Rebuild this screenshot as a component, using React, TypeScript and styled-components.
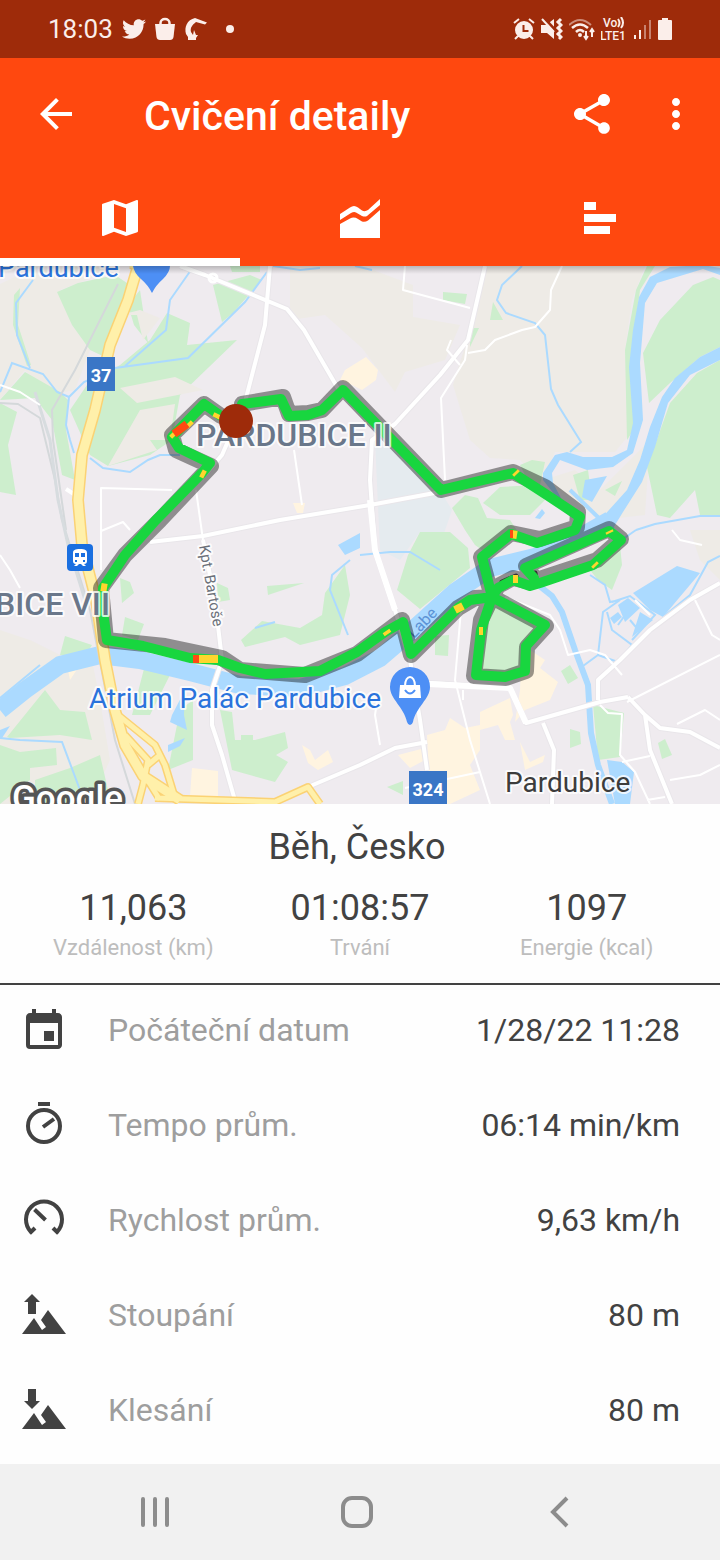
import React from "react";
import styled, { createGlobalStyle } from "styled-components";
import { MdArrowBack, MdEvent, MdMap, MdMoreVert, MdShare } from "react-icons/md";
import { FaTwitter } from "react-icons/fa";

const GlobalStyle = createGlobalStyle`
  *, *::before, *::after { box-sizing: border-box; }
  body {
    margin: 0;
    background: #fefefe;
    color: #424242;
    font-family: Roboto, "Liberation Sans", sans-serif;
  }
  svg { display: block; flex: none; }
`;

const Screen = styled.div`
  display: flex;
  flex-direction: column;
  min-height: 100vh;
`;

const StatusBar = styled.div`
  display: flex;
  align-items: center;
  justify-content: space-between;
  height: 58px;
  padding: 0 48px;
  background: #9e2b0a;
  color: #fbeeea;
`;

const StatusGroup = styled.div<{ $gap: number }>`
  display: flex;
  align-items: center;
  gap: ${(p) => p.$gap}px;
`;

const Clock = styled.time`
  font-size: 26px;
  line-height: 32px;
`;

const Header = styled.header`
  background: #ff480f;
  color: #fff;
`;

const Toolbar = styled.div`
  display: flex;
  align-items: center;
  height: 112px;
  padding: 0 20px 0 32px;
`;

const Title = styled.h1`
  flex: 1;
  margin: 4px 0 0 64px;
  font-size: 41px;
  line-height: 48px;
  font-weight: 500;
`;

const IconButton = styled.button`
  display: flex;
  margin: 0 0 0 36px;
  padding: 0;
  border: 0;
  background: none;
  color: inherit;
  &:first-child { margin: 0; }
`;

const Tabs = styled.nav`
  display: grid;
  grid-template-columns: repeat(3, 1fr);
  height: 96px;
`;

const Tab = styled.button<{ $active?: boolean }>`
  display: flex;
  align-items: center;
  justify-content: center;
  padding: 8px 0 0;
  border: 0;
  border-bottom: 8px solid ${(p) => (p.$active ? "#fff" : "transparent")};
  background: none;
  color: inherit;
`;

const MapSvg = styled.svg`
  width: 100%;
  height: auto;
  background: #efebef;
`;

const Summary = styled.section`
  padding: 21px 20px;
  border-bottom: 2px solid #424242;
`;

const Activity = styled.h2`
  margin: 0 0 17px;
  padding-right: 6px;
  font-size: 36px;
  line-height: 44px;
  font-weight: 400;
  text-align: center;
`;

const Stats = styled.dl`
  display: grid;
  grid-template-columns: repeat(3, 1fr);
  margin: 0;
`;

const Stat = styled.div`
  display: flex;
  flex-direction: column-reverse;
  gap: 4px;
  text-align: center;
`;

const StatLabel = styled.dt`
  font-size: 22px;
  line-height: 28px;
  color: #bdbdbd;
  white-space: nowrap;
`;

const StatValue = styled.dd`
  margin: 0;
  font-size: 36px;
  line-height: 44px;
`;

const Details = styled.dl`
  flex: 1;
  margin: 0;
  padding-bottom: 4px;
`;

const DetailRow = styled.div`
  display: flex;
  align-items: center;
  height: 95px;
  padding: 0 40px 4px 20px;
  font-size: 32px;
  line-height: 40px;
`;

const DetailLabel = styled.dt`
  flex: 1;
  margin-left: 40px;
  padding-bottom: 2px;
  color: #9e9e9e;
`;

const DetailValue = styled.dd`
  margin: 0;
  padding-bottom: 2px;
`;

const NavBar = styled.nav`
  display: grid;
  grid-template-columns: repeat(3, 1fr);
  height: 96px;
  padding: 0 60px 0 54px;
  background: #f1f1f1;
`;

const NavButton = styled.button`
  display: flex;
  align-items: center;
  justify-content: center;
  padding: 0;
  border: 0;
  background: none;
  color: #8c8c8c;
`;

/* ---------- status icons ---------- */

const BagIcon = () => (
  <svg width="20" height="24" viewBox="0 0 20 24" fill="none">
    <path d="M5.500 8V6a4.500 4 0 0 1 9 0V8" stroke="currentColor" strokeWidth="2.500" />
    <path d="M0 7H20L18.500 20Q18 23 15 23H5Q2 23 1.500 20Z" fill="currentColor" />
  </svg>
);

const ArmIcon = () => (
  <svg width="24" height="24" viewBox="0 0 24 24" fill="currentColor">
    <path d="M11 1 23 5.500l-2 2L12 5C8 8 6 11 7 15L9 18l1-5 2 5h2l-2 3v2H4v-3L2 17C0 10 3 3 11 1Z" />
  </svg>
);

const DotIcon = () => (
  <svg width="30" height="10" viewBox="0 0 30 10" fill="currentColor">
    <circle cx="13" cy="5" r="4" />
  </svg>
);

const AlarmIcon = () => (
  <svg width="22" height="24" viewBox="0 0 22 24">
    <path d="m1 6 5-4M21 6l-5-4M5 19l-3 3M17 19l3 3" stroke="currentColor" strokeWidth="2" fill="none" />
    <circle cx="11" cy="13" r="9" fill="currentColor" />
    <path d="M10.500 8v6h5" stroke="#9e2b0a" strokeWidth="2" fill="none" />
  </svg>
);

const MuteIcon = () => (
  <svg width="22" height="24" viewBox="0 0 22 24">
    <path d="M0 8h5l8-6v20l-7-6H0Z" fill="currentColor" />
    <path d="M3 1 15 14" stroke="#9e2b0a" strokeWidth="3" />
    <path d="m1 2 12 13" stroke="currentColor" strokeWidth="2" />
    <path d="m20 2-3 3 3 3-3 3 3 3-3 3 3 3-2 2" stroke="currentColor" strokeWidth="3" fill="none" />
  </svg>
);

const WifiIcon = () => (
  <svg width="26" height="24" viewBox="0 0 26 24" fill="none" stroke="currentColor" strokeWidth="2">
    <path d="M0 8Q11-2 22 8" opacity="0.5" />
    <path d="M3 11Q11 4 19 11M7 15Q11 11 15 15" strokeWidth="2.500" />
    <circle cx="11" cy="18" r="1" fill="currentColor" />
    <path d="M17 14v8m-2-3 2 3 2-3M23 20v-8m-2 3 2-3 2 3" />
  </svg>
);

const VolteIcon = () => (
  <svg width="26" height="24" viewBox="0 0 26 24" fill="currentColor" fontSize="12" fontWeight="500">
    <text x="2" y="10">Vo</text>
    <text x="-1" y="23">LTE1</text>
    <path d="M17 2q3 4 0 8M20 0q4 6 0 11" stroke="currentColor" strokeWidth="2" fill="none" />
  </svg>
);

const SignalIcon = () => (
  <svg width="19" height="24" viewBox="0 0 19 24" fill="currentColor">
    <path d="M1 18h2v4H1ZM6 13h2v9H6Z" />
    <path d="M11 8h2v14h-2ZM16 3h2v19h-2Z" opacity="0.45" />
  </svg>
);

const BatteryIcon = () => (
  <svg width="14" height="24" viewBox="0 0 14 24" fill="currentColor">
    <path d="M4 1h6v2h3q1 0 1 1v18q0 1-1 1H1q-1 0-1-1V4q0-1 1-1h3Z" />
  </svg>
);

/* ---------- tab icons ---------- */

const AreaChartIcon = () => (
  <svg width="48" height="48" viewBox="0 0 48 48" fill="currentColor">
    <path d="M4 20 14 13.500Q18 10.500 22 13.500L26 16.500Q29 18 32 16L44 5V11L31 22Q29 23 26 22L20 18.500Q18 17.500 15 19L4 26Z" />
    <path d="M4 30 14 24.500Q18 22.500 22 25L26 27.500Q29 28.500 32 26.500L44 16V44H4Z" />
  </svg>
);

const BarsIcon = () => (
  <svg width="48" height="48" viewBox="0 0 48 48" fill="currentColor">
    <path d="M8 8h12v8H8ZM8 20h32v8H8ZM8 32h26v8H8Z" />
  </svg>
);

/* ---------- detail icons ---------- */

const StopwatchIcon = () => (
  <svg width="48" height="48" viewBox="0 0 48 48" fill="none" stroke="currentColor" strokeWidth="4">
    <path d="M18 2h12M23 25l11-8" />
    <circle cx="24" cy="24" r="16" />
  </svg>
);

const GaugeIcon = () => (
  <svg width="48" height="48" viewBox="0 0 48 48" fill="none" stroke="currentColor" strokeWidth="4">
    <path d="M15 31 11 35A18 18 0 1 1 37 35L33 31M14.500 12.500 25.500 23" />
  </svg>
);

const MountainIcon = ({ down }: { down?: boolean }) => (
  <svg width="48" height="48" viewBox="0 0 48 48" fill="currentColor">
    <path d="M2 42 14 26 22 38 26 35 21 28 28 18 46 42Z" />
    <path d={down ? "M8 2h8v12h4l-8 8-8-8h4Z" : "M12 2l8 8h-4v12H8V10H4Z"} />
  </svg>
);

/* ---------- map ---------- */

const GREEN_AREAS = [
  "M57 292 78 283 115 275 130 285 105 357 90 350 72 325Z",
  "M14 295 20 288 18 325 31 365 27 366 13 325Z",
  "M0 400 25 372 60 392 68 400 66 430 75 480 62 475 52 420 35 398Z",
  "M0 403 17 412 8 445 16 495 0 492Z",
  "M128 305 140 290 148 343 134 325Z",
  "M167 313 190 323 187 345 237 340 180 395 172 440 150 455 108 466 90 455 70 410 87 385 120 365 150 340Z",
  "M213 285 250 275 262 280 233 313 222 322Z",
  "M230 266h30v6h-28Z",
  "M443 292 467 294 465 304 443 300Z",
  "M493 302 503 320 490 320Z",
  "M470 328 479 328 470 347Z",
  "M647 266 636 290 625 350 627 440 640 420 632 350 640 290 655 266Z",
  "M643 353 660 320 693 285 713 277 720 280V347L700 357 670 383 649 403Z",
  "M720 360 697 373 670 403 647 467 657 515 670 518 695 490 700 515 720 515Z",
  "M520 465 532 460 545 462 540 485 525 475Z",
  "M483 503 500 487 535 485 545 500 530 515 500 515Z",
  "M452 508 465 495 478 498 487 518 510 520 520 535 482 550 475 545 465 530Z",
  "M573 475 588 470 592 500 580 500Z",
  "M605 490 622 481 615 496Z",
  "M397 590 408 555 420 532 450 532 468 548 470 568 420 609Z",
  "M120 578 130 582 134 593 122 603Z",
  "M125 617 144 624 138 640 122 635Z",
  "M217 583 228 588 230 600 218 602Z",
  "M267 586 304 583 268 595Z",
  "M241 640 262 621 300 628 322 615 325 593 345 565 350 595 340 635 300 645 285 637 245 647Z",
  "M7 737 45 690 60 710 85 712 92 740 60 735 10 738Z",
  "M65 636 92 645 86 655 60 655Z",
  "M0 745 20 752 56 748 57 765 30 768 30 780 0 804Z",
  "M35 780 70 768 100 755 108 790 70 804 35 804Z",
  "M145 665 170 675 150 715 132 715Z",
  "M180 710 193 700 193 760 168 770Z",
  "M220 710 232 712 235 740 255 740 285 732 288 748 276 755 288 762 275 782 232 770Z",
  "M241 735h12v16h-12Z",
  "M485 610 495 600 545 626 527 648 526 670 506 678 475 677Z",
  "M435 636 449 635 448 656 435 655Z",
  "M561 671 570 665 578 678 568 684Z",
  "M570 729 580 732 581 744 570 748Z",
  "M593 705 624 713 620 757 598 760Z",
  "M658 743 665 739 672 755 662 759Z",
  "M387 787 403 781 403 795Z",
  "M590 570 620 545 622 565 612 590 598 580Z",
];

const BEIGE_LAND = [
  "M0 284 25 272 75 266 118 268 60 290 72 325 90 350 75 390 50 395 25 370 0 400Z",
  "M290 266H362L413 285 413 317 460 325 445 360 405 372 395 392 362 348 325 315 290 320Z",
  "M485 266H645L632 300 625 350 633 430 615 452 555 452 542 482 520 460 490 458 470 440 453 385 470 330Z",
  "M543 480 575 470 600 490 650 440 645 515 600 520 575 500Z",
  "M0 630 30 640 60 655 90 650 100 700 110 760 90 804H0Z",
  "M690 530H720V580L700 560Z",
];

const BEIGE_CLEARINGS = [
  "M120 388 175 377 203 390 137 403Z",
  "M140 410 175 404 170 440 150 440 157 450 108 466Z",
  "M120 315 137 315 143 340 160 318 140 310Z",
];

const SAND_AREAS = [
  "M340 380 345 370 366 357 378 370 376 380 362 390 350 384Z",
  "M192 768 218 771 218 796 190 796Z",
  "M302 745 310 750 315 760 328 750 333 762 318 770 308 763Z",
  "M521 665 530 650 545 660 540 668 558 682 550 700 525 710 515 722 520 690Z",
  "M427 735 445 730 450 718 465 728 480 725 480 712 510 698 513 715 510 722 515 740 505 740 498 725 480 730 480 750 470 765 480 790 450 804H430Z",
  "M520 742 530 762 545 755 543 762 525 770Z",
  "M398 755 425 748 425 760 410 768Z",
  "M66 660 78 668 70 680Z",
  "M293 503h12l-2 10h-6Z",
];

const PONDS = [
  "M633 593 677 566 700 573 663 617 650 610Z",
  "M618 605 628 598 640 608 625 622Z",
  "M610 618 618 612 622 617 614 624Z",
  "M640 612 653 620 632 637Z",
  "M585 480 607 476 592 502 582 497Z",
  "M535 518 542 509 545 513 540 519Z",
  "M338 545 360 533V548L345 555Z",
  "M0 730 10 726 2 738 0 738Z",
  "M172 715 185 690 184 715 187 730 170 722Z",
  "M168 745 185 738 180 746 168 752Z",
  "M607 760 622 762 634 772 630 804H615Z",
];

const STREAMS = [
  "M33 280 16 303 17 335 30 368M0 392 12 363 43 374 57 392 69 397 84 382 115 368 188 358 245 302 267 272M191 270 170 300 166 330 125 366",
  "M69 397 66 425 70 440 74 453M90 458 103 468 130 472 148 460 160 455H180",
  "M522 266 502 285 497 300 506 313 535 323 545 335 551 389 558 405 581 442 570 452",
  "M273 266 300 270 320 268M355 266 372 270",
  "M360 555 390 552 410 552 440 570",
  "M636 530 655 524 700 516H720M600 555 636 530",
  "M590 575 605 585 610 602 620 600 603 612 598 655 618 662 632 645 612 630 607 612",
  "M612 602 630 596 655 615 632 640M618 625 630 608M630 620 640 632",
  "M583 666 598 655M720 556 708 562 690 595 663 617",
  "M350 560 332 575 330 590 340 615 348 635",
  "M0 738 20 740 62 742 80 790M0 698 40 665M255 628 275 622",
];

const ROADS_MINOR = [
  "M0 385 20 392 40 405",
  "M405 266 403 290 470 308M562 266 551 290 550 310 535 327 522 330 495 340 485 350 468 353M467 345 465 360 441 398 445 480M451 340 447 350 460 365",
  "M101 570V488L172 490M101 531 123 522 130 530",
  "M294 450 302 505M196 490 203 540",
  "M0 555 10 570 20 588M461 610 455 680 470 740 490 804",
  "M378 695 375 715 380 745M405 788 480 772M463 690 463 700",
  "M627 702 720 655M677 724 705 710 720 720M670 780 700 775 720 765M647 800 665 797M622 762 650 756M695 600 712 635 720 640",
  "M622 675 605 655 590 650 568 655 560 630 550 615 505 597M600 705 608 713 622 714 620 755 635 772 650 804",
  "M672 530 680 540 702 545M635 600 650 615",
];

const ROADS_MAJOR = [
  "M180 266 205 275 287 309 304 330 340 392M270 266 265 325 245 402 222 455 205 475",
  "M485 266 468 340 440 375 395 424 372 440 370 480 375 550 395 610 410 660 420 720 427 770",
  "M150 542 203 536 280 520 370 505 440 492",
  "M203 540 215 600 222 660 212 690 212 725 222 755 236 804",
  "M410 683 430 683 510 688 526 723 600 702 628 697",
  "M720 583 690 600 650 630 620 660 598 680 598 700M628 697 645 715 660 728 690 732 720 748M645 715 650 750 672 804M543 723 554 750 552 804",
  "M427 742 395 748 360 765 308 787",
];

const HIGHWAY_MAIN = "M138 266 128 300 110 345 95 410 82 455 78 500 82 545 96 600 105 660 115 710 125 745 143 776 180 800";

const HIGHWAY_RAMPS = [
  "M118 715 155 745 165 765 175 798M125 735 148 760 143 785 138 804M148 765 160 755M145 776 160 800",
  "M138 266 130 265M155 798 275 802 308 787 320 804",
];

const TRACK = [
  "M221 416 204 404 172 437 179 448 210 463 203 472 155 521 125 555 103 588 103 612 107 640 143 646 190 658 218 660 240 668 265 674 320 671 357 652 385 632 403 622 411 654 458 608 470 600 492 597",
  "L545 625 526 646 525 671 505 677 476 675 481 630 492 597 482 557 511 534 537 543 575 530 580 517 547 495 513 473 441 490 343 390 322 410 308 415 289 416 281 399 242 404",
  "M492 597 498 588 513 580 530 586 540 583 593 565 621 540 609 531 525 568 534 578",
].join("");

const TRACK_SHADOW = [
  "M221 416 204 404 172 435 176 450 211 466 160 520 125 555 101 588 106 640 165 646 222 658 240 670 305 675 357 654 402 620 411 655 458 608 475 598 492 597",
  "L546 626 527 647 526 671 506 678 474 676 481 620 492 597 481 557 511 533 540 539 577 527 578 512 545 487 513 472 441 490 343 388 322 410 308 413 289 414 283 397 242 404",
  "M492 597 498 586 513 578 530 582 597 560 621 539 609 529 526 566 536 580",
].join("");

const YELLOW_MARKS =
  "M218 414l-2 4M201 473l4 2M101 587l6 1M196 659H218M386 631l2 3M455 610l8-4M479 631h4M515 472l2 2M511 534l6 1M609 531l1 2M594 564l2 2M513 579h5M172 433l3 3M188 423l3 3";
const RED_MARKS = "M174 434 187 424M193 659H199M510 534H513";

const RouteMap = () => (
  <MapSvg viewBox="0 266 720 538" role="img" aria-label="Mapa">
    <defs>
      <linearGradient id="headerShade" x2="0" y2="1">
        <stop offset="0" stopColor="#000" stopOpacity="0.22" />
        <stop offset="1" stopColor="#000" stopOpacity="0" />
      </linearGradient>
    </defs>
    <path d={BEIGE_LAND.join("")} fill="#eeebe6" />
    <path d="M375 440 395 440 441 492 452 510 440 545 420 532 400 560 380 550Z" fill="#e5ebef" />
    <path d={GREEN_AREAS.join("")} fill="#cdeecd" />
    <path d={BEIGE_CLEARINGS.join("")} fill="#eeebe6" />
    <path d={SAND_AREAS.join("")} fill="#fff4e0" />

    <g fill="none" stroke="#abdaff">
      <path d={STREAMS.join("")} strokeWidth="2" />
      <path
        d="M0 710 25 690 60 665 100 655 140 660 190 672 240 685 300 688 345 676 380 658 415 628 455 592 490 568 535 557 575 540 610 520"
        strokeWidth="18"
        strokeLinejoin="round"
      />
      <path d="M532 580 552 596 562 612 575 650 588 685 591 733 598 765 612 804" strokeWidth="6" />
      <path d="M570 490 603 522" strokeWidth="4" />
    </g>
    <path
      d="M650 277 670 267 703 265 720 268V275L703 269 657 283 645 303 640 363 643 420 633 453 613 467 587 470 560 460 552 473 553 483 562 500 555 495 543 480 543 473 555 455 567 452 583 457 612 457 627 450 633 423 629 367 633 330 639 297Z M720 347 700 357 675 378 662 397 650 427 640 460 627 490 600 520 575 540 612 530 623 512 642 482 655 447 668 403 690 375 720 360Z"
      fill="#abdaff"
    />
    <path d={PONDS.join("")} fill="#abdaff" />

    <g fill="none" strokeLinejoin="round">
      <path
        d="M118 284 75 370 52 410 53 440 66 530M0 403 18 404 40 418 55 480 62 520 90 610 115 740 135 804"
        stroke="#d4d8da"
        strokeWidth="2"
      />
      <path d="M35 392 50 440 58 500 68 545 85 600" stroke="#d7dcdf" strokeWidth="3" />
      <path d={ROADS_MAJOR.join("")} stroke="#e9e6ea" strokeWidth="6" />
      <path d={ROADS_MINOR.join("")} stroke="#fff" strokeWidth="2" />
      <path d={ROADS_MAJOR.join("")} stroke="#fff" strokeWidth="4" />
      <path d="M370 500 375 550 395 610M428 684 510 688 526 723" stroke="#fff" strokeWidth="6" />
      <path d="M66 489 80 498" stroke="#fff" strokeWidth="4" />
      <circle cx="213" cy="278" r="4" stroke="#fff" strokeWidth="3" />
      <path d={HIGHWAY_RAMPS.join("")} stroke="#fbd274" strokeWidth="8" />
      <path d={HIGHWAY_MAIN} stroke="#fbd274" strokeWidth="12" />
      <path d={HIGHWAY_RAMPS.join("")} stroke="#fff0aa" strokeWidth="5" />
      <path d={HIGHWAY_MAIN} stroke="#fff0aa" strokeWidth="9" />
    </g>

    <text x="414" y="639" transform="rotate(-46 414 639)" fontSize="16" fill="#5c93d6">Labe</text>

    <g fill="none" strokeLinejoin="round" strokeLinecap="round">
      <path d={TRACK_SHADOW} stroke="#000" strokeOpacity="0.4" strokeWidth="16" />
      <path d="M535 573 536 579M502 582 516 576" stroke="#333" strokeWidth="5" />
      <path d={TRACK} stroke="#18d63f" strokeWidth="10" />
      <path d={YELLOW_MARKS} stroke="#ffd52e" strokeWidth="8" strokeLinecap="butt" />
      <path d={RED_MARKS} stroke="#ff4a12" strokeWidth="8" strokeLinecap="butt" />
    </g>

    <path d="M130 266H170Q170 272 163 279Q156 285 152 293Q148 285 141 279Q134 273 133 266Z" fill="#4d8ff5" />
    <g stroke="#fff" strokeOpacity="0.8" strokeWidth="4" strokeLinejoin="round" paintOrder="stroke">
      <text x="-2" y="277" fontSize="27" fill="#2a73dc">Pardubice</text>
      <text x="196" y="446" fontSize="32" fontWeight="500" fill="#6a778a">PARDUBICE II</text>
      <text x="110" y="615" fontSize="32" fontWeight="500" fill="#6a778a" textAnchor="end">PARDUBICE VII</text>
      <text x="89" y="708" fontSize="28" fill="#2a73dc">Atrium Palác Pardubice</text>
      <text x="505" y="792" fontSize="28" fill="#3c3c3c">Pardubice</text>
      <text x="199" y="546" transform="rotate(80 199 546)" fontSize="15" fill="#6b7079">Kpt. Bartoše</text>
    </g>
    <circle cx="236" cy="421" r="17" fill="#9e2b0a" />

    <rect x="87" y="357" width="28" height="34" fill="#3a76c6" />
    <rect x="409" y="771" width="38" height="34" fill="#3a76c6" />
    <g fill="#fff" fontSize="18" fontWeight="700" textAnchor="middle">
      <text x="101" y="382">37</text>
      <text x="428" y="796">324</text>
    </g>

    <rect x="67" y="544" width="26" height="27" rx="4" fill="#1a6fe0" />
    <path
      d="M80 549c5 0 7 1 7 4v8q0 3-3 3l2 2h-3l-2-2h-2l-2 2h-3l2-2q-3 0-3-3v-8c0-3 2-4 7-4ZM75 553v4h4v-4ZM81 553v4h4v-4ZM75 560v2h2v-2ZM83 560v2h2v-2Z"
      fill="#fff"
      fillRule="evenodd"
    />

    <path d="M410 667a20 20 0 0 1 20 20c0 12-14 20-17 35q-1 3-3 3t-3-3c-3-15-17-23-17-35a20 20 0 0 1 20-20Z" fill="#4d8ff5" />
    <path d="M400 685h20l1 13h-22Z" fill="#fff" />
    <path d="M405 686c0-12 10-12 10 0" fill="none" stroke="#fff" strokeWidth="2" />
    <path d="M405 690q5 7 10 0" fill="none" stroke="#4d8ff5" strokeWidth="2" />

    <text
      x="12"
      y="810"
      fontSize="35"
      fontWeight="500"
      fill="#fff"
      stroke="#555"
      strokeWidth="7"
      strokeLinejoin="round"
      paintOrder="stroke"
    >
      Google
    </text>
    <rect y="266" width="720" height="8" fill="url(#headerShade)" />
  </MapSvg>
);

/* ---------- data ---------- */

const stats = [
  { label: "Vzdálenost (km)", value: "11,063" },
  { label: "Trvání", value: "01:08:57" },
  { label: "Energie (kcal)", value: "1097" },
];

const details = [
  { icon: <MdEvent size={48} />, label: "Počáteční datum", value: "1/28/22 11:28" },
  { icon: <StopwatchIcon />, label: "Tempo prům.", value: "06:14 min/km" },
  { icon: <GaugeIcon />, label: "Rychlost prům.", value: "9,63 km/h" },
  { icon: <MountainIcon />, label: "Stoupání", value: "80 m" },
  { icon: <MountainIcon down />, label: "Klesání", value: "80 m" },
];

export default function App() {
  return (
    <Screen>
      <GlobalStyle />
      <StatusBar>
        <StatusGroup $gap={9}>
          <Clock>18:03</Clock>
          <FaTwitter size={24} />
          <BagIcon />
          <ArmIcon />
          <DotIcon />
        </StatusGroup>
        <StatusGroup $gap={6}>
          <AlarmIcon />
          <MuteIcon />
          <WifiIcon />
          <VolteIcon />
          <SignalIcon />
          <BatteryIcon />
        </StatusGroup>
      </StatusBar>
      <Header>
        <Toolbar>
          <IconButton aria-label="Zpět"><MdArrowBack size={48} /></IconButton>
          <Title>Cvičení detaily</Title>
          <IconButton aria-label="Sdílet"><MdShare size={48} /></IconButton>
          <IconButton aria-label="Další"><MdMoreVert size={48} /></IconButton>
        </Toolbar>
        <Tabs>
          <Tab $active aria-label="Mapa"><MdMap size={48} /></Tab>
          <Tab aria-label="Graf"><AreaChartIcon /></Tab>
          <Tab aria-label="Úseky"><BarsIcon /></Tab>
        </Tabs>
      </Header>
      <RouteMap />
      <Summary>
        <Activity>Běh, Česko</Activity>
        <Stats>
          {stats.map((s) => (
            <Stat key={s.label}>
              <StatLabel>{s.label}</StatLabel>
              <StatValue>{s.value}</StatValue>
            </Stat>
          ))}
        </Stats>
      </Summary>
      <Details>
        {details.map((d) => (
          <DetailRow key={d.label}>
            {d.icon}
            <DetailLabel>{d.label}</DetailLabel>
            <DetailValue>{d.value}</DetailValue>
          </DetailRow>
        ))}
      </Details>
      <NavBar>
        <NavButton aria-label="Poslední aplikace">
          <svg width="36" height="36" viewBox="0 0 36 36" stroke="currentColor" strokeWidth="4" strokeLinecap="round">
            <path d="M6 5v26M18 5v26M30 5v26" />
          </svg>
        </NavButton>
        <NavButton aria-label="Domů">
          <svg width="36" height="36" viewBox="0 0 36 36" fill="none" stroke="currentColor" strokeWidth="4">
            <rect x="4" y="4" width="28" height="28" rx="9" />
          </svg>
        </NavButton>
        <NavButton aria-label="Zpět">
          <svg width="36" height="36" viewBox="0 0 36 36" fill="none" stroke="currentColor" strokeWidth="4">
            <path d="M26 4 12 18 26 32" />
          </svg>
        </NavButton>
      </NavBar>
    </Screen>
  );
}
